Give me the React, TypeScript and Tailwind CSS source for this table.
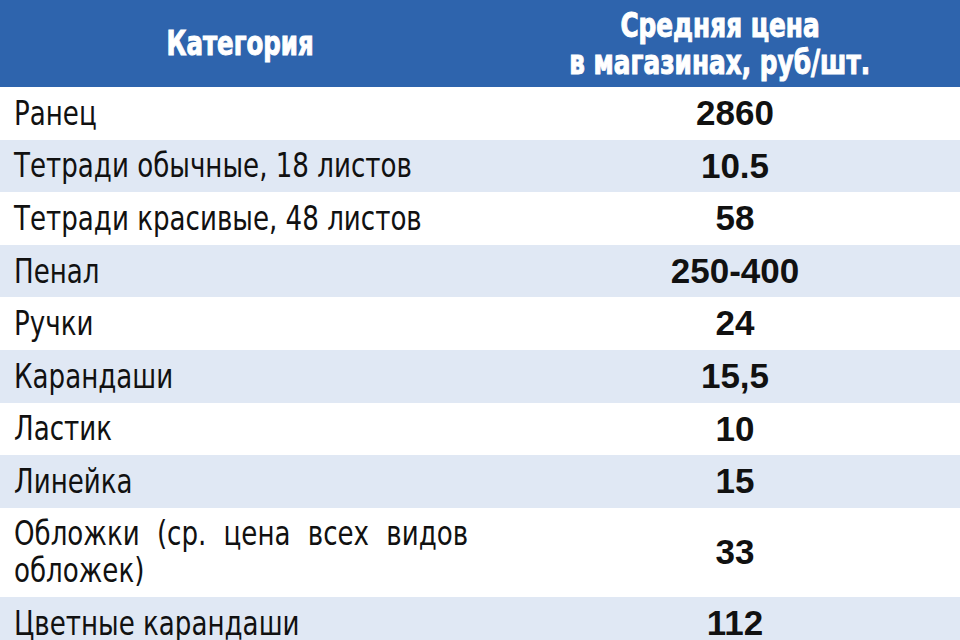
const ROWS: { name: string; price: string; tall?: boolean }[] = [
  { name: 'Ранец', price: '2860' },
  { name: 'Тетради обычные, 18 листов', price: '10.5' },
  { name: 'Тетради красивые, 48 листов', price: '58' },
  { name: 'Пенал', price: '250-400' },
  { name: 'Ручки', price: '24' },
  { name: 'Карандаши', price: '15,5' },
  { name: 'Ластик', price: '10' },
  { name: 'Линейка', price: '15' },
  { name: 'Обложки (ср. цена всех видов обложек)', price: '33', tall: true },
  { name: 'Цветные карандаши', price: '112' },
];

// no narrow Arial here, so DejaVu Condensed squeezed a little more
const narrow = { fontFamily: '"Liberation Sans Narrow", "DejaVu Sans Condensed", sans-serif' };
const digits = { fontFamily: '"Liberation Sans", Arial, sans-serif' };

export default function App() {
  return (
    <div className="w-[960px] h-[640px] overflow-hidden bg-white">
      {/* header */}
      <div
        className="grid grid-cols-[510px_450px] h-[87px] bg-[#2e64ad] text-white [-webkit-text-stroke:1px_white]"
        style={narrow}
      >
        <div className="flex items-center justify-center pr-[30px] text-[34px] font-bold leading-[37px]">
          <span className="inline-block scale-x-[0.8] whitespace-nowrap">Категория</span>
        </div>
        <div className="flex flex-col items-center justify-center pr-[30px] text-[34px] font-bold leading-[37px] text-center">
          <span className="inline-block scale-x-[0.81] whitespace-nowrap">Средняя цена</span>
          <span className="inline-block scale-x-[0.81] whitespace-nowrap">в магазинах, руб/шт.</span>
        </div>
      </div>

      {/* rows */}
      {ROWS.map((row, i) => (
        <div
          key={row.name}
          className={`grid grid-cols-[510px_450px] ${row.tall ? 'h-[89px]' : 'h-[52.6px]'} ${
            i % 2 === 1 ? 'bg-[#e0e8f4]' : 'bg-white'
          }`}
        >
          <div
            className="flex items-center pl-[14px] text-[33px] leading-[37px] text-[#111]"
            style={narrow}
          >
            {row.tall ? (
              <span className="block w-[516px] shrink-0 origin-left scale-x-[0.88] text-justify">
                {row.name}
              </span>
            ) : (
              <span className="inline-block origin-left scale-x-[0.88] whitespace-nowrap">
                {row.name}
              </span>
            )}
          </div>
          <div
            className="flex items-center justify-center text-[35px] font-bold text-[#111]"
            style={digits}
          >
            {row.price}
          </div>
        </div>
      ))}
    </div>
  );
}
